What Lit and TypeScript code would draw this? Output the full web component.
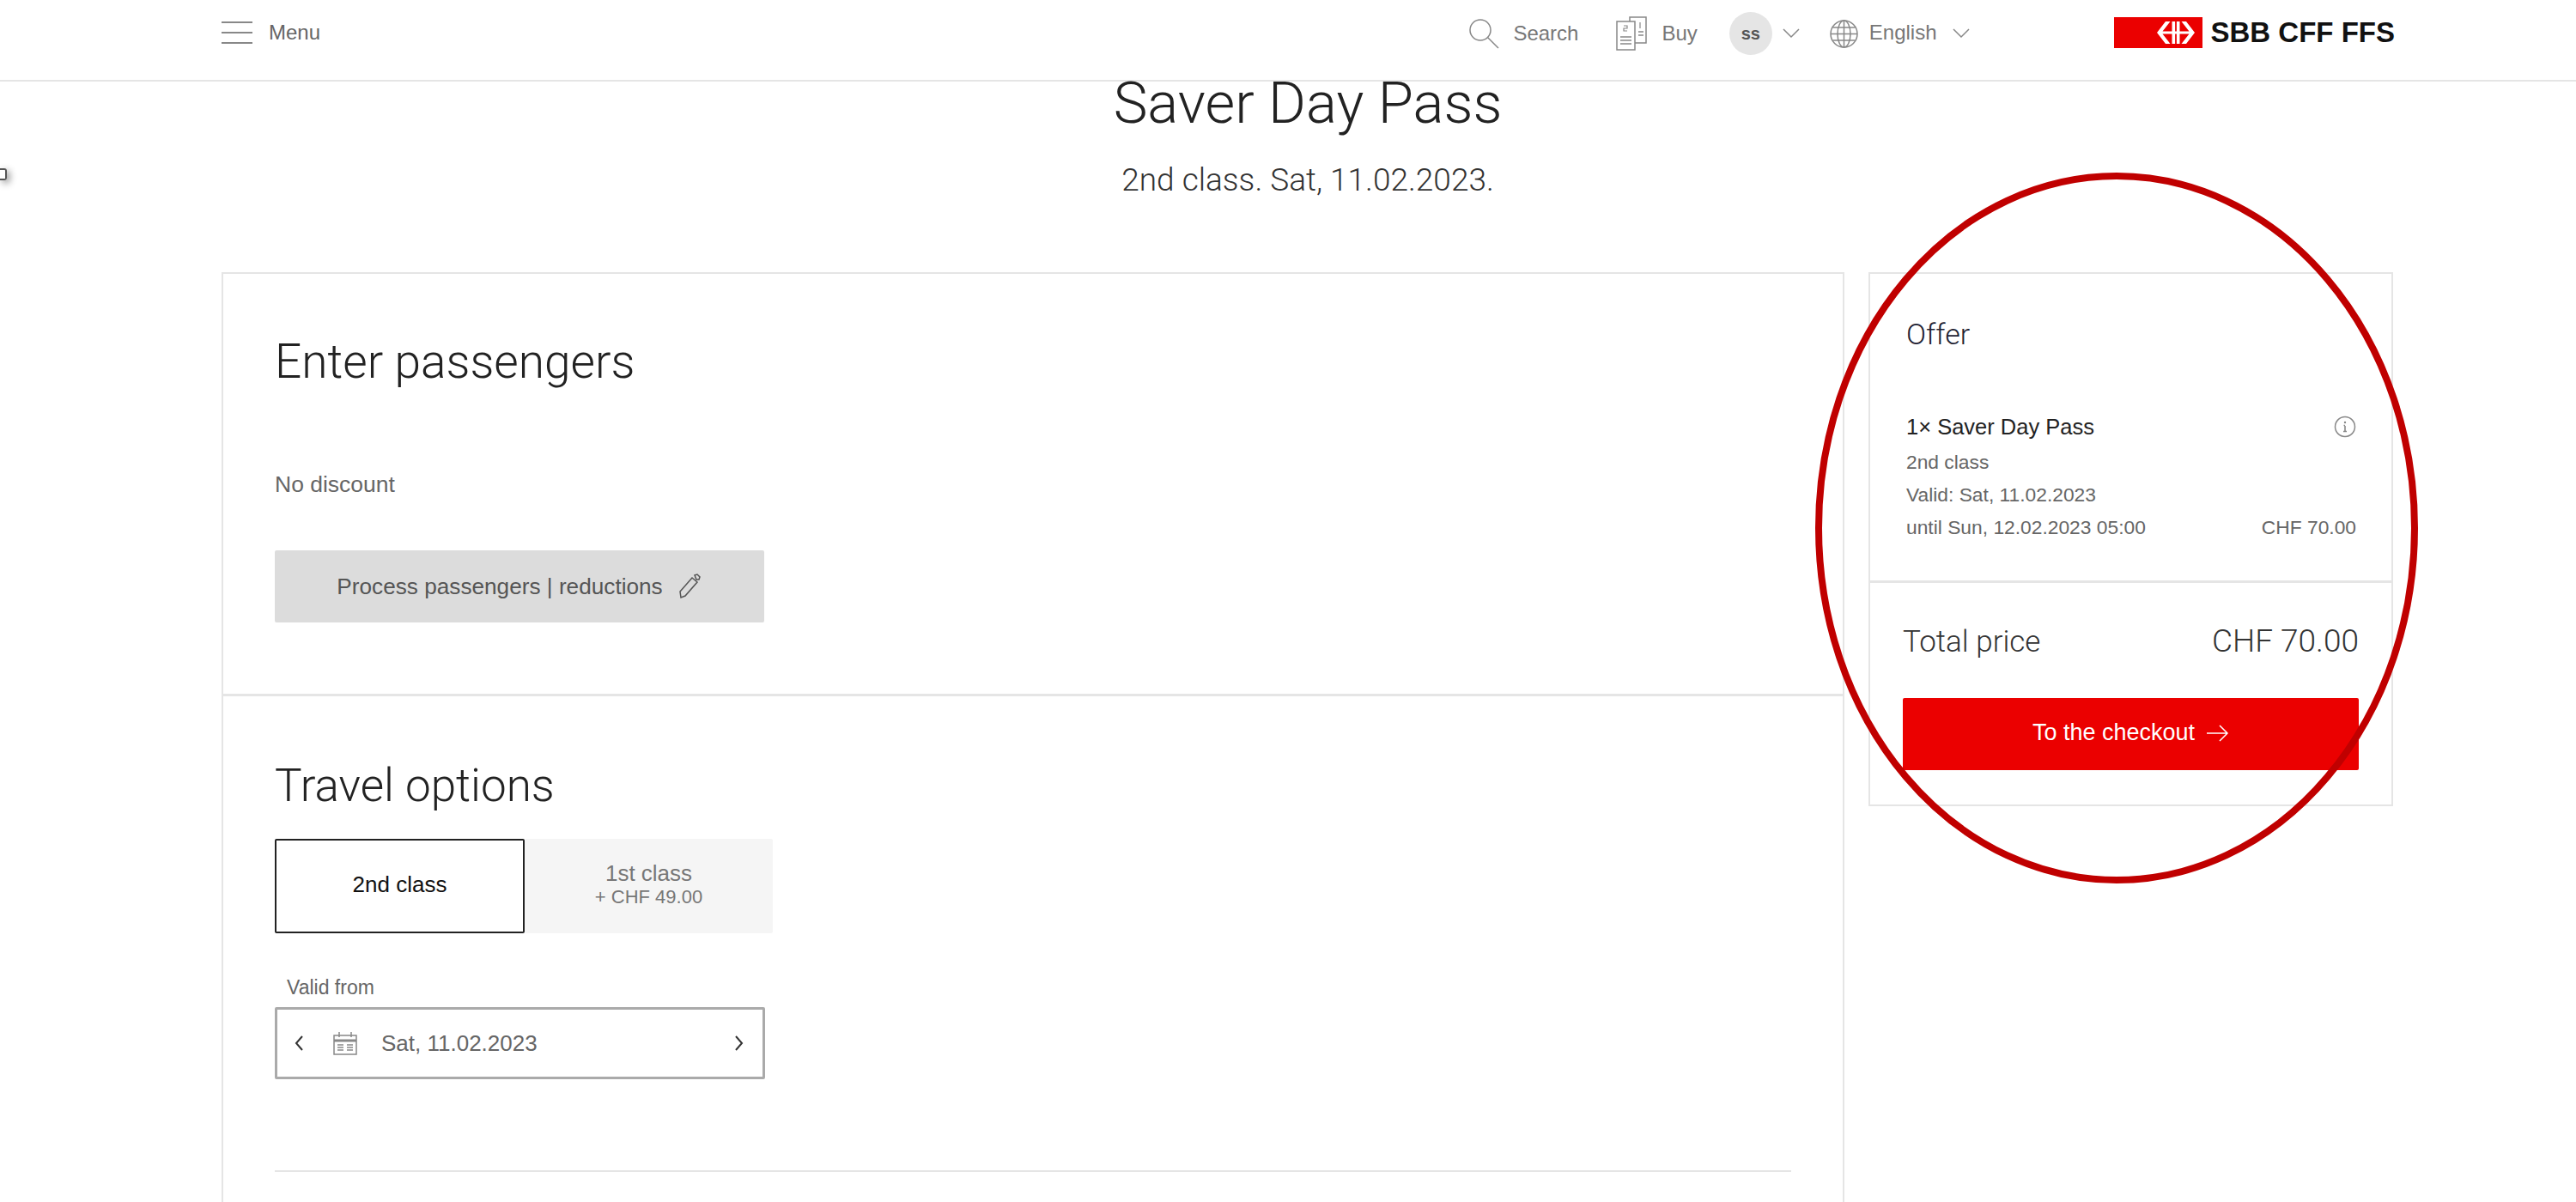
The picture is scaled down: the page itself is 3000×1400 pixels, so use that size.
import { LitElement, html, css, svg } from 'lit';
import { customElement } from 'lit/decorators.js';

const icon = (w: number, h: number, body: unknown, cls = '') =>
  html`<svg class=${cls} width=${w} height=${h} viewBox="0 0 ${w} ${h}" fill="none" stroke="currentColor" stroke-width="1.5">${body}</svg>`;

@customElement('app-root')
class AppRoot extends LitElement {
  static styles = css`
    :host {
      display: block;
      height: 1400px;
      overflow: hidden;
      position: relative;
      background: #fff;
      font-family: 'Liberation Sans', Arial, sans-serif;
      color: #444;
    }
    header {
      height: 93px;
      box-sizing: content-box;
      border-bottom: 2px solid #e5e5e5;
      padding: 0 211px 0 258px;
      display: flex;
      align-items: flex-start;
      font-size: 24px;
      color: #777;
    }
    .menu { display: flex; align-items: center; gap: 19px; height: 76px; }
    .menu span { color: #666; }
    .menu svg { color: #888; }
    .tools { margin-left: auto; display: flex; align-items: center; height: 78px; }
    .tool { display: flex; align-items: center; }
    .tool svg { color: #888; }
    .search { gap: 16px; margin-right: 44px; }
    .buy { gap: 17px; margin-right: 37px; }
    .user { gap: 12px; margin-right: 35px; }
    .lang { gap: 13px; }
    .lang span { margin-top: -3px; }
    .lang .chev { margin-left: 5px; }
    .avatar {
      width: 50px; height: 50px; border-radius: 50%; background: #e5e5e5;
      display: flex; align-items: center; justify-content: center;
      font-size: 20px; font-weight: 700; color: #555;
    }
    .logo { display: flex; align-items: center; gap: 10px; margin-left: 168px; height: 76px; }
    .logo b { font-size: 33px; color: #111; }
    .flag { width: 103px; height: 36px; background: #eb0000; display: flex; align-items: center; justify-content: flex-end; padding-right: 9px; box-sizing: border-box; }
    .hero { text-align: center; color: #222; padding-left: 46px; font-family: Roboto, 'Liberation Sans', sans-serif; font-weight: 300; }
    h1 { margin: -3px 0 0; font-size: 67px; font-weight: 300; line-height: 56px; }
    .sub { font-size: 37px; line-height: 40px; margin-top: 42px; color: #333; }
    .page { display: flex; gap: 28px; padding: 87px 0 0 258px; align-items: flex-start; }
    .main { width: 1890px; height: 1200px; border: 2px solid #e5e5e5; border-bottom: 0; box-sizing: border-box; }
    .panel { padding: 0 60px; }
    .passengers { height: 492px; border-bottom: 3px solid #e5e5e5; overflow: hidden; box-sizing: border-box; }
    h2 { margin: 0; font-weight: 300; font-size: 53px; color: #222; font-family: Roboto, 'Liberation Sans', sans-serif; }
    .passengers h2 { padding-top: 72px; line-height: 60px; font-size: 55px; }
    .discount { margin-top: 98px; font-size: 26.5px; line-height: 30px; color: #666; }
    .process {
      margin-top: 62px; width: 570px; height: 84px; background: #dcdcdc; color: #555; border-radius: 2px;
      display: flex; align-items: center; justify-content: center; gap: 18px; font-size: 26.2px;
    }
    .travel h2 { padding-top: 74px; line-height: 60px; }
    .classes { display: flex; margin-top: 32px; }
    .cls { width: 289px; height: 110px; box-sizing: border-box; padding-bottom: 4px; display: flex; flex-direction: column; align-items: center; justify-content: center; font-size: 26px; color: #777; background: #f5f5f5; border-radius: 2px; line-height: 30px; }
    .cls small { font-size: 22px; line-height: 26px; }
    .cls.on { width: 291px; border: 2px solid #222; background: #fff; color: #111; }
    .valid-label { margin: 48px 0 0 14px; font-size: 23px; line-height: 30px; color: #666; }
    .date {
      margin-top: 8px; width: 571px; height: 84px; border: 3px solid #aaa; box-sizing: border-box; border-radius: 2px;
      display: flex; align-items: center; padding: 0 21px 0 19px; font-size: 26px; color: #666;
    }
    .date .cal { margin: 0 28px 0 34px; color: #888; }
    .date .right { margin-left: auto; }
    .rule { margin-top: 106px; border-top: 2px solid #e5e5e5; }
    aside { width: 611px; height: 622px; border: 2px solid #e5e5e5; box-sizing: border-box; }
    .offer { padding: 0 41px 0 42px; height: 360px; border-bottom: 3px solid #e5e5e5; box-sizing: border-box; }
    .offer h3 { margin: 0; padding-top: 50px; font-weight: 300; font-size: 34px; line-height: 40px; color: #223; font-family: Roboto, 'Liberation Sans', sans-serif; }
    .line { display: flex; justify-content: space-between; align-items: center; }
    .name { margin-top: 71px; font-size: 25.5px; line-height: 34px; color: #222; }
    .meta { font-size: 22.8px; line-height: 38px; color: #666; }
    .first { margin-top: 5px; }
    .info { color: #888; }
    .total { display: flex; justify-content: space-between; align-items: baseline; padding: 46px 38px 0 38px; font-size: 35px; line-height: 44px; color: #333; font-family: Roboto, 'Liberation Sans', sans-serif; font-weight: 300; }
    .total .price { font-size: 37px; }
    .cta {
      margin: 43px 38px 0 38px; height: 84px; box-sizing: border-box; padding-bottom: 3px; background: #eb0000; color: #fff; border-radius: 2px;
      display: flex; align-items: center; justify-content: center; gap: 14px; font-size: 27px;
    }
    .circle { position: absolute; left: 2114px; top: 201px; width: 702px; height: 828px; }
    .stray { position: absolute; left: 0; top: 196px; width: 8px; height: 14px; border: 2px solid #555; border-left: 0; border-radius: 0 3px 3px 0; box-sizing: border-box; box-shadow: 3px 3px 8px rgba(0,0,0,.45); }
  `;

  render() {
    return html`
      <header>
        <div class="menu">
          ${icon(36, 28, svg`<path d="M0 2h36M0 14h36M0 26h36" stroke-width="2"/>`)}
          <span>Menu</span>
        </div>
        <div class="tools">
          <div class="tool search">
            ${icon(36, 36, svg`<circle cx="14" cy="14" r="12"/><path d="M22.5 22.5L35 35"/>`)}<span>Search</span>
          </div>
          <div class="tool buy">
            ${icon(36, 40, svg`<path d="M16 6V1h19v30H22M1 6h21v33H1z"/><path d="M5 24h13M5 28h13M5 32h13M26 18h6M26 22h6" stroke-width="1.5"/><path d="M9 11h4v3H9v3h4M28 7v7" stroke-width="1.2"/>`)}<span>Buy</span>
          </div>
          <div class="tool user">
            <div class="avatar">ss</div>
            ${icon(20, 12, svg`<path d="M1 1l9 9 9-9"/>`)}
          </div>
          <div class="tool lang">
            ${icon(33, 33, svg`<circle cx="16.5" cy="16.5" r="15.5"/><ellipse cx="16.5" cy="16.5" rx="7.5" ry="15.5"/><path d="M16.5 1v31M1 16.5h31M3.5 9h26M3.5 24h26"/>`)}<span>English</span>
            ${icon(20, 12, svg`<path d="M1 1l9 9 9-9"/>`, 'chev')}
          </div>
        </div>
        <div class="logo">
          <div class="flag">
            <svg width="44" height="26" viewBox="0 0 44 26" fill="#fff">
              <path d="M10 0h5.5L6.5 11.5h11V0h3.6v11.5h1.8V0h3.6v11.5h11L28.5 0H34l10 13-10 13h-5.5l9-11.5h-11V26h-3.6V14.5h-1.8V26h-3.6V14.5h-11l9 11.5H10L0 13z"/>
            </svg>
          </div>
          <b>SBB CFF FFS</b>
        </div>
      </header>
      <div class="hero">
        <h1>Saver Day Pass</h1>
        <div class="sub">2nd class. Sat, 11.02.2023.</div>
      </div>
      <div class="page">
        <div class="main">
          <section class="panel passengers">
            <h2>Enter passengers</h2>
            <div class="discount">No discount</div>
            <div class="process">
              <span>Process passengers | reductions</span>
              ${icon(28, 30, svg`<path d="M3 28l-1-7L16 5l6 5L8 26zM19 2l3-1 3 3-1 3-3 0z"/>`)}
            </div>
          </section>
          <section class="panel travel">
            <h2>Travel options</h2>
            <div class="classes">
              <div class="cls on">2nd class</div>
              <div class="cls">1st class<small>+ CHF 49.00</small></div>
            </div>
            <div class="valid-label">Valid from</div>
            <div class="date">
              ${icon(12, 20, svg`<path d="M10 2l-7 8 7 8" stroke-width="2" stroke="#333"/>`)}
              ${icon(28, 28, svg`<path d="M1 5h26v22H1zM7 1v6M21 1v6"/><path d="M1 11h26" stroke-width="3"/><path d="M5 16h7M5 19h7M5 22h7M16 16h7M16 19h7M16 22h7"/>`, 'cal')}
              <span>Sat, 11.02.2023</span>
              ${icon(12, 20, svg`<path d="M2 2l7 8-7 8" stroke-width="2" stroke="#333"/>`, 'right')}
            </div>
            <div class="rule"></div>
          </section>
        </div>
        <aside>
          <div class="offer">
            <h3>Offer</h3>
            <div class="line name">
              <span>1× Saver Day Pass</span>
              ${icon(26, 26, svg`<circle cx="13" cy="13" r="11.5"/><path d="M13 12v6.5M11 18.5h4M11.5 11.5H13" stroke-width="1.6"/><circle cx="13" cy="8" r="1.2" fill="currentColor" stroke="none"/>`, 'info')}
            </div>
            <div class="meta first">2nd class</div>
            <div class="meta">Valid: Sat, 11.02.2023</div>
            <div class="line meta"><span>until Sun, 12.02.2023 05:00</span><span>CHF 70.00</span></div>
          </div>
          <div class="total"><span>Total price</span><span class="price">CHF 70.00</span></div>
          <div class="cta"><span>To the checkout</span>${icon(26, 20, svg`<path d="M0 10h24M15 1l9 9-9 9"/>`)}</div>
        </aside>
      </div>
      <svg class="circle" viewBox="0 0 702 828" fill="none"><ellipse cx="351" cy="414" rx="347" ry="410" stroke="#c00000" stroke-width="8"/></svg>
      <div class="stray"></div>
    `;
  }
}
